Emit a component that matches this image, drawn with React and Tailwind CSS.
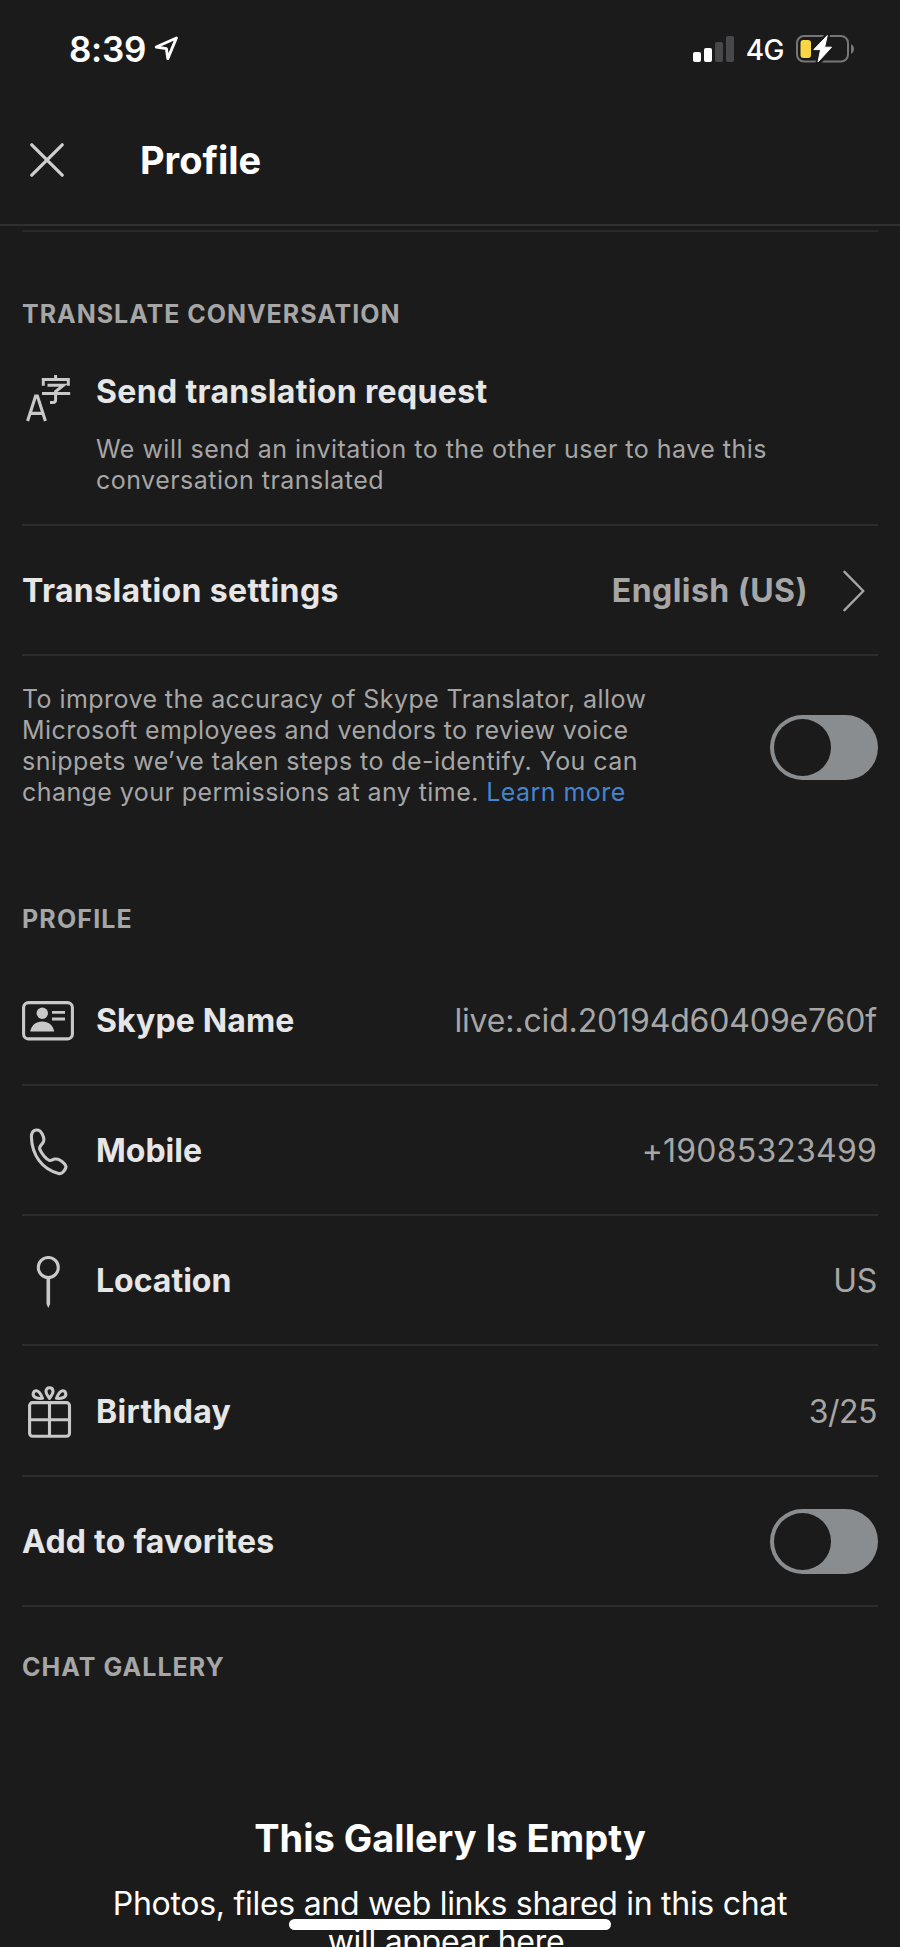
const profileRows = [
  { label: 'Skype Name', value: 'live:.cid.20194d60409e760f', Icon: CardIcon, height: 'h-[131px]', labelSpacing: 'tracking-[0.15px]', spacing: 'tracking-[-0.15px]' },
  { label: 'Mobile', value: '+19085323499', Icon: PhoneIcon, height: 'h-[130px]', labelSpacing: 'tracking-normal', spacing: 'tracking-[0.2px]' },
  { label: 'Location', value: 'US', Icon: PinIcon, height: 'h-[130px]', labelSpacing: 'tracking-normal', spacing: 'tracking-[-0.3px]' },
  { label: 'Birthday', value: '3/25', Icon: GiftIcon, height: 'h-[131px]', labelSpacing: 'tracking-[0.3px]', spacing: 'tracking-[-0.5px]' },
]

function LocationArrow() {
  return (
    <svg width="26" height="28" viewBox="0 0 26 28" fill="none" stroke="white" strokeWidth="2.9" strokeLinejoin="round">
      <path d="M2.2 12 L22.4 3 L13.8 23.6 L12.4 13.6 Z" />
    </svg>
  )
}

function SignalBars() {
  return (
    <svg width="41" height="28" viewBox="0 0 41 28">
      <rect x="0" y="17" width="8" height="10" rx="2" fill="#fff" />
      <rect x="11" y="13" width="8" height="14" rx="2" fill="#fff" />
      <rect x="22" y="7" width="8" height="20" rx="2" fill="#48484a" />
      <rect x="33" y="1" width="8" height="26" rx="2" fill="#48484a" />
    </svg>
  )
}

function Battery() {
  return (
    <svg width="59" height="30" viewBox="0 0 59 30">
      <rect x="1" y="2" width="51" height="25.5" rx="7" fill="none" stroke="#77777a" strokeWidth="2" />
      <path d="M55 10.2 Q58 11.5 58 15 Q58 18.5 55 19.8 Z" fill="#77777a" />
      <path d="M31.5 1 L17.5 16 H25 L22 28.8 L36 13.8 H28.5 Z" fill="#fff" stroke="#1b1b1b" strokeWidth="5" strokeLinejoin="round" />
      <rect x="4.5" y="6" width="10.5" height="18" rx="3" fill="#fbd644" />
      <path d="M31.3 1.5 L17.8 15.6 H24.6 L22 28 L35.5 13.2 H28.6 Z" fill="#fff" stroke="#fff" strokeWidth="1" strokeLinejoin="round" />
    </svg>
  )
}

function TranslateIcon() {
  return (
    <svg width="52" height="52" viewBox="0 0 52 52" fill="none" stroke="#c9c9c9" strokeWidth="3">
      <path d="M5.6 46 L13.6 21 H15.4 L23.4 46 M8.6 38.4 H20.4" strokeWidth="3.1" />
      <path d="M33.6 0 V4.5 M21.3 10.8 V4.5 H46.3 V10.8 M25.5 10.2 H41.5 L33.6 16.5 V24.8 Q33.6 27.5 31 27.5 H28 M20 18.4 H48.2" />
    </svg>
  )
}

function CardIcon() {
  return (
    <svg width="52" height="40" viewBox="0 0 52 40" fill="#c9c9c9">
      <rect x="1.6" y="1.6" width="48.8" height="36.3" rx="5" fill="none" stroke="#c9c9c9" strokeWidth="3.1" />
      <circle cx="20.3" cy="12.3" r="5.7" />
      <path d="M8.2 30.5 C9.5 24 14 20.5 20.2 20.5 S31 24 32.2 30.5 Z" />
      <path d="M30 11.4 H43 M30 18 H43" stroke="#c9c9c9" strokeWidth="2.9" />
    </svg>
  )
}

function PhoneIcon() {
  return (
    <svg className="ml-[2px]" width="52" height="52" viewBox="0 0 52 52" fill="none" stroke="#c9c9c9" strokeWidth="3.1" strokeLinejoin="round">
      <path d="M12.2 4 C8.5 4.5 7.4 7 7.4 11 C7.9 29 18 43 34.5 47.4 C36.5 48 38 47.3 39.5 45.5 L41.3 43 C42.3 41.5 42 39.7 40.8 38.3 C38.5 35.5 34.7 32.7 31 33 C28.5 33.2 27.5 35.1 25.3 34.4 C22 33 17.5 27.5 15.7 23.2 C15 21 17 19.5 18.4 17.5 C20.6 14.5 20.3 12.5 18.3 8.2 C16.8 5 15.5 3.5 12.2 4 Z" />
    </svg>
  )
}

function PinIcon() {
  return (
    <svg width="52" height="52" viewBox="0 0 52 52" fill="none" stroke="#c9c9c9">
      <circle cx="26.3" cy="11.5" r="10" strokeWidth="3.1" />
      <path d="M24.5 21.5 H28.1 V48 L26.3 52 L24.5 48 Z" fill="#c9c9c9" stroke="none" />
    </svg>
  )
}

function GiftIcon() {
  return (
    <svg width="52" height="52" viewBox="0 0 52 52" fill="none" stroke="#c9c9c9" strokeWidth="3.1" strokeLinejoin="round">
      <rect x="7.6" y="16.6" width="39.9" height="33.6" rx="3" />
      <path d="M27.5 16.6 V50 M7.6 33.7 H47.4" />
      <path d="M27.5 12.4 C25.5 9.5 24 8 24 5.5 C24 3 25.3 1.8 27.5 1.8 S31 3 31 5.5 C31 8 29.5 9.5 27.5 12.4 Z" />
      <path d="M20.5 12.3 C17 12.7 14.5 12.5 12.6 11 C9.8 8.8 11.5 4.7 14.5 4.8 C17.5 5 19 8.5 20.5 12.3 Z" />
      <path d="M34.5 12.3 C38 12.7 40.5 12.5 42.4 11 C45.2 8.8 43.5 4.7 40.5 4.8 C37.5 5 36 8.5 34.5 12.3 Z" />
    </svg>
  )
}

function Toggle() {
  return (
    <button className="h-[65px] w-[108px] shrink-0 rounded-full bg-[#8a8d8f] p-1">
      <span className="block size-[57px] rounded-full bg-[#1b1b1b]" />
    </button>
  )
}

function SectionTitle({ children, className }) {
  return (
    <h2 className={`text-[25px] leading-[30px] font-bold text-[#a6a6a6] ${className}`}>{children}</h2>
  )
}

function App() {
  return (
    <div className="relative h-[1947px] w-[900px] overflow-hidden bg-[#1b1b1b] font-['Inter','Liberation_Sans',sans-serif] text-[#e6e6e6]">
      {/* status bar */}
      <div className="flex h-[98px] items-center pl-[69px] pr-[45px]">
        <span className="text-[35px] leading-10 font-semibold tracking-[-0.3px] text-white">8:39</span>
        <span className="ml-[8px]"><LocationArrow /></span>
        <span className="ml-auto"><SignalBars /></span>
        <span className="ml-3 pt-[2px] text-[28px] leading-9 font-medium tracking-[-0.5px] text-white">4G</span>
        <span className="ml-3"><Battery /></span>
      </div>

      {/* header */}
      <header className="flex h-[128px] items-start border-b-2 border-[#303032] pl-[30px] pt-[38px]">
        <button className="mt-[7px]">
          <svg width="34" height="34" viewBox="0 0 34 34" stroke="#cfcfcf" strokeWidth="3.2" strokeLinecap="round">
            <path d="M1.8 1.8 L32.2 32.2 M32.2 1.8 L1.8 32.2" />
          </svg>
        </button>
        <h1 className="ml-[76px] text-[38px] leading-[48px] font-bold text-white">Profile</h1>
      </header>

      <main className="px-[22px] pt-[4px]">
        <div className="h-[2px] bg-[#2a2a2d]" />

        <SectionTitle className="mt-[67px] tracking-[0.97px]">TRANSLATE CONVERSATION</SectionTitle>

        <div className="flex h-[197px] border-b-2 border-[#2c2c2d]">
          <div className="mt-[46px] w-[74px] shrink-0"><TranslateIcon /></div>
          <div className="pt-[43px]">
            <h3 className="text-[32px] leading-10 font-bold tracking-[0.34px]">Send translation request</h3>
            <p className="mt-[22px] w-[700px] text-[25px] leading-[31px] tracking-[0.48px] text-[#a6a6a6]">
              We will send an invitation to the other user to have this<br />conversation translated
            </p>
          </div>
        </div>

        <div className="flex h-[130px] items-center border-b-2 border-[#2c2c2d] pt-[2px]">
          <span className="text-[32px] leading-10 font-bold tracking-[0.37px]">Translation settings</span>
          <span className="ml-auto text-[32px] leading-10 font-bold tracking-[0.45px] text-[#a6a6a6]">English (US)</span>
          <svg className="ml-[35px] mr-[13px]" width="22" height="42" viewBox="0 0 22 42" fill="none" stroke="#a6a6a6" strokeWidth="2.4" strokeLinecap="round" strokeLinejoin="round">
            <path d="M1.5 1.8 L20.3 21 L1.5 40.2" />
          </svg>
        </div>

        <div className="flex items-start justify-between pt-[28px]">
          <p className="text-[25px] leading-[31px] tracking-[0.43px] whitespace-nowrap text-[#a6a6a6]">
            To improve the accuracy of Skype Translator, allow<br />
            Microsoft employees and vendors to review voice<br />
            snippets we’ve taken steps to de-identify. You can<br />
            change your permissions at any time. <a className="text-[#4585cf]">Learn more</a>
          </p>
          <div className="mt-[31px]"><Toggle /></div>
        </div>

        <SectionTitle className="mt-[96px] tracking-[1.15px]">PROFILE</SectionTitle>

        <div className="mt-[21px]">
          {profileRows.map(({ label, value, Icon, height, labelSpacing, spacing }) => (
            <div key={label} className={`flex items-center border-b-2 border-[#2c2c2d] ${height}`}>
              <div className="w-[74px] pt-[3px]"><Icon /></div>
              <span className={`pt-[2px] text-[32px] leading-10 font-bold ${labelSpacing}`}>{label}</span>
              <span className={`mr-px ml-auto pt-[2px] text-[32px] leading-10 text-[#a6a6a6] ${spacing}`}>{value}</span>
            </div>
          ))}
          <div className="flex h-[130px] items-center justify-between border-b-2 border-[#2c2c2d] pt-px">
            <span className="text-[32px] leading-10 font-bold tracking-[0.25px]">Add to favorites</span>
            <Toggle />
          </div>
        </div>

        <SectionTitle className="mt-[45px] tracking-[1.05px]">CHAT GALLERY</SectionTitle>

        <div className="mt-[132px] text-center text-white">
          <h3 className="text-[38px] leading-[48px] font-bold">This Gallery Is Empty</h3>
          <p className="mt-[23px] text-[32px] leading-[38px] tracking-[-0.29px]">
            Photos, files and web links shared in this chat<br /><span className="pr-2">will appear here</span>
          </p>
        </div>
      </main>

      {/* home indicator */}
      <div className="absolute bottom-[17px] left-[289px] h-[11px] w-[322px] rounded-full bg-white" />
    </div>
  )
}

export default App
